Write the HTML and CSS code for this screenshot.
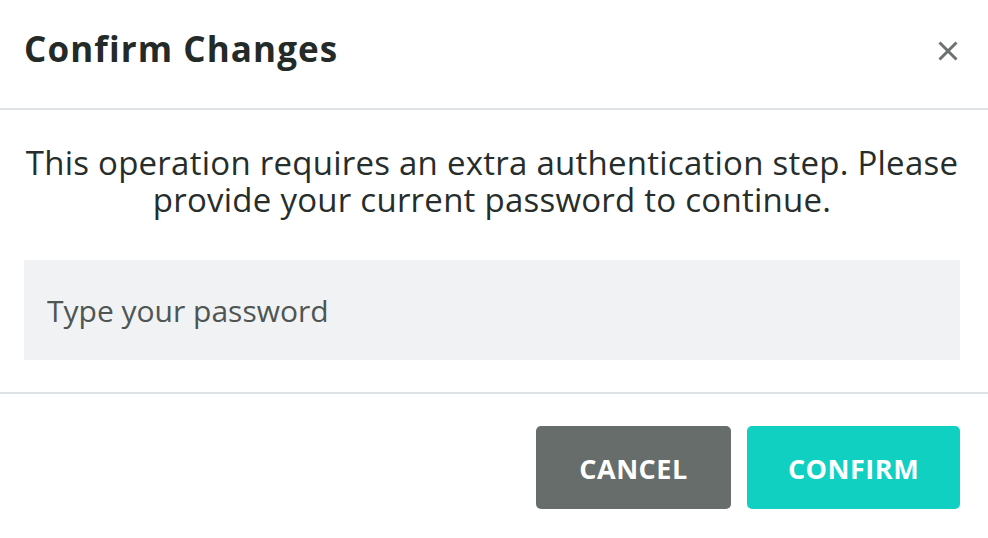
FILE: index.html
```html
<!DOCTYPE html>
<html lang="en">
<head>
<meta charset="utf-8">
<title>Confirm Changes</title>
<link rel="stylesheet" href="styles.css">
</head>
<body>
<div class="modal">
  <div class="modal-header">
    <h1 class="modal-title">Confirm Changes</h1>
    <button class="close-btn" aria-label="Close">
      <svg width="20" height="20" viewBox="0 0 20 20"><path d="M1.5 1.5 L18.5 18.5 M18.5 1.5 L1.5 18.5" stroke="#6b7270" stroke-width="3"/></svg>
    </button>
  </div>
  <div class="modal-body">
    <p class="message">This operation requires an extra authentication step. Please provide your current password to continue.</p>
    <input class="password" type="password" placeholder="Type your password">
  </div>
  <div class="modal-footer">
    <button class="btn btn-cancel">CANCEL</button>
    <button class="btn btn-confirm">CONFIRM</button>
  </div>
</div>
</body>
</html>
```
FILE: styles.css
```css
html, body {
  margin: 0;
  padding: 0;
  background: #ffffff;
}
body {
  font-family: "Open Sans", "Lato", sans-serif;
  color: #262d2b;
}
.modal {
  width: 988px;
}
.modal-header {
  display: flex;
  align-items: center;
  justify-content: space-between;
  padding: 0 30px 10px 24px;
  border-bottom: 2px solid #dfe2e5;
  box-sizing: border-box;
  height: 110px;
}
.modal-title {
  margin: 0;
  font-size: 35px;
  line-height: 40px;
  letter-spacing: 1.1px;
  font-weight: 700;
  color: #232a28;
}
.close-btn {
  border: 0;
  background: none;
  padding: 0;
  width: 20px;
  height: 20px;
  display: flex;
  margin-top: 4px;
}
.modal-body {
  padding: 34px 28px 32px 24px;
}
.message {
  margin: 0 0 42px;
  text-align: center;
  font-size: 33px;
  line-height: 37px;
  letter-spacing: 0.25px;
  color: #262d2b;
}
.password {
  display: block;
  width: 100%;
  height: 100px;
  box-sizing: border-box;
  border: 0;
  background: #f1f2f4;
  padding: 0 23px;
  font-family: inherit;
  font-size: 30px;
  outline: none;
}
.password::placeholder {
  color: #4f5553;
  opacity: 1;
}
.modal-footer {
  display: flex;
  justify-content: flex-end;
  gap: 16px;
  border-top: 2px solid #dfe2e5;
  padding: 32px 28px 0 24px;
}
.btn {
  height: 83px;
  padding: 2px 0 0;
  border: 0;
  border-radius: 5px;
  color: #ffffff;
  font-family: inherit;
  font-weight: 700;
  font-size: 27px;
  letter-spacing: 0.5px;
}
.btn-cancel {
  width: 195px;
  background: #666d6b;
}
.btn-confirm {
  width: 213px;
  background: #10d0c2;
}
```
